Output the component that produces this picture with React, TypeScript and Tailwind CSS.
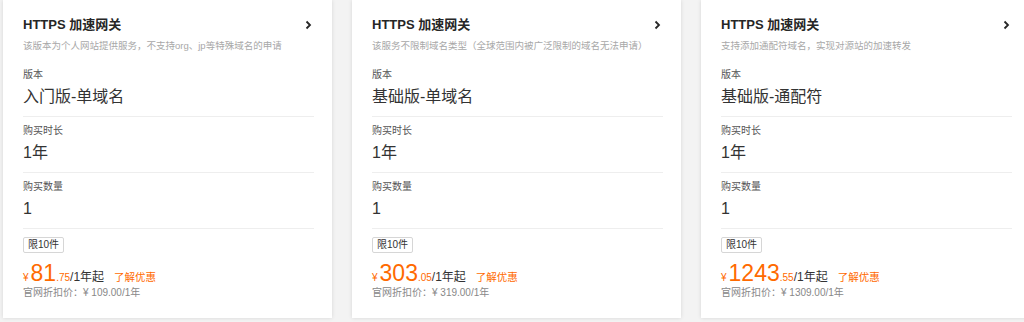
import React from "react";

type Card = {
  desc: string;
  version: string;
  int: string;
  dec: string;
  orig: string;
};

const cards: Card[] = [
  {
    desc: "该版本为个人网站提供服务，不支持org、jp等特殊域名的申请",
    version: "入门版-单域名",
    int: "81",
    dec: ".75",
    orig: "109.00",
  },
  {
    desc: "该服务不限制域名类型（全球范围内被广泛限制的域名无法申请）",
    version: "基础版-单域名",
    int: "303",
    dec: ".05",
    orig: "319.00",
  },
  {
    desc: "支持添加通配符域名，实现对源站的加速转发",
    version: "基础版-通配符",
    int: "1243",
    dec: ".55",
    orig: "1309.00",
  },
];

function Section({ label, value, first }: { label: string; value: string; first?: boolean }) {
  return (
    <div className={`${first ? "pt-[2px]" : "pt-[5px]"} pb-[6px] border-b border-[#eeeeee]`}>
      <div className="text-[10px] leading-[18px] text-[#555]">{label}</div>
      <div className="text-[16px] leading-[26px] text-[#333]">{value}</div>
    </div>
  );
}

function ProductCard({ c }: { c: Card }) {
  return (
    <div className="w-[329px] shrink-0 bg-white shadow-[0_0_4px_rgba(0,0,0,0.12)] pl-[20px] pr-[18px] pt-[15px] pb-[18px]">
      <div className="flex items-center justify-between h-[20px]">
        <div className="text-[13px] font-bold text-[#262626] leading-[20px]">HTTPS 加速网关</div>
        <svg width="7" height="10" viewBox="0 0 7 10" className="mr-[2px]">
          <path d="M1.5 1.5 L5 5 L1.5 8.5" fill="none" stroke="#262626" strokeWidth="1.8" />
        </svg>
      </div>
      <div className="mt-[2px] text-[9.5px] leading-[18px] text-[#a8a8a8] whitespace-nowrap">{c.desc}</div>
      <div className="mt-[9px]">
        <Section label="版本" value={c.version} first />
        <Section label="购买时长" value="1年" />
        <Section label="购买数量" value="1" />
      </div>
      <div className="mt-[8px] flex">
        <span className="border border-[#d6d6d6] rounded-[2px] px-[4px] text-[10px] leading-[14px] text-[#333]">限10件</span>
      </div>
      <div className="mt-[7px] flex items-baseline h-[26px] leading-[26px]">
        <span className="text-[10px] text-[#ff6a00] mr-[2px]">¥</span>
        <span className="text-[23px] text-[#ff6a00]">{c.int}</span>
        <span className="text-[10px] text-[#ff6a00]">{c.dec}</span>
        <span className="text-[12px] text-[#333]">/1年起</span>
        <span className="ml-[10px] text-[10.5px] text-[#ff6a00]">了解优惠</span>
      </div>
      <div className="text-[10px] leading-[14px] text-[#888]">官网折扣价：¥ {c.orig}/1年</div>
    </div>
  );
}

export default function App() {
  return (
    <div
      className="w-[1024px] h-[322px] overflow-hidden bg-[#f3f3f3] flex gap-[20px] pl-[3px] items-start"
      style={{ fontFamily: '"Liberation Sans", Arial, "Noto Sans CJK SC", sans-serif' }}
    >
      {cards.map((c, i) => (
        <ProductCard key={i} c={c} />
      ))}
    </div>
  );
}
